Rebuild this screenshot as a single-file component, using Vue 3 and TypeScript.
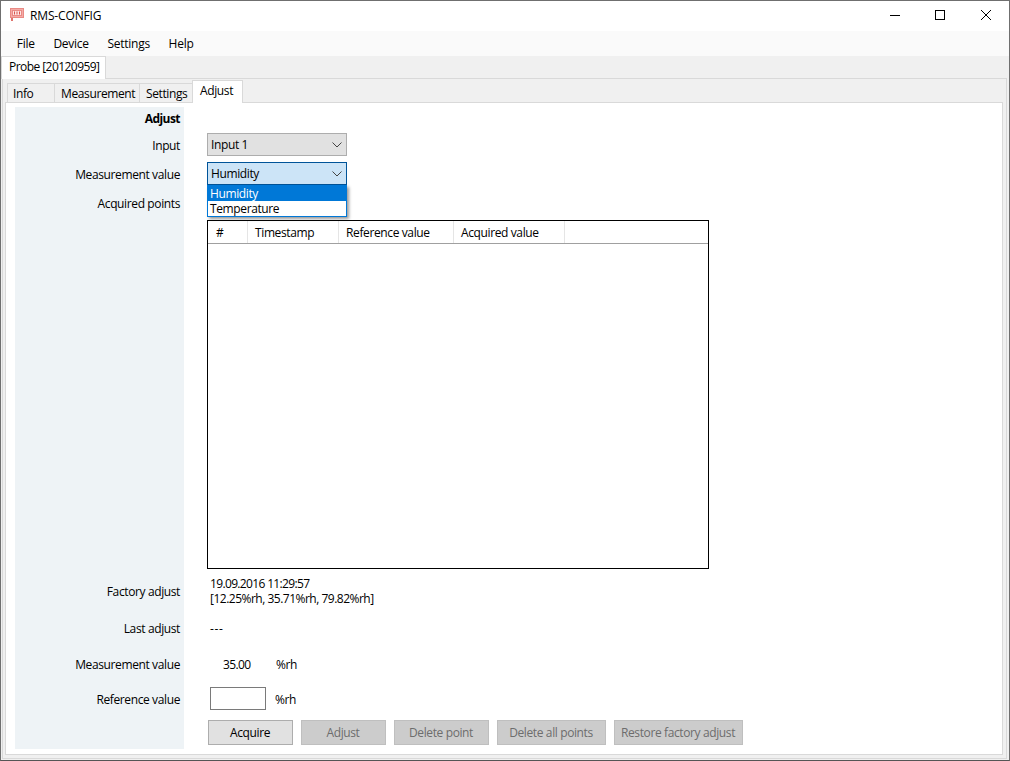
<template>
  <div class="window">
    <div class="titlebar">
      <svg class="app-icon" width="16" height="16" viewBox="0 0 16 16">
        <rect x="1.5" y="1.5" width="13" height="9" fill="#f4aaa6" stroke="#e98a84" />
        <rect x="3.5" y="3.5" width="9" height="5" fill="#fde6e4" stroke="#e98a84" />
        <path d="M5.5 4.5v3M8 4.5v3M10.5 4.5v3" stroke="#d9534c" />
        <rect x="2" y="11" width="2" height="3" fill="#e0736c" />
      </svg>
      <span class="title">RMS-CONFIG</span>
      <div class="win-btns">
        <svg width="46" height="30" viewBox="0 0 46 30"><path d="M19 15.5h10" stroke="#000" fill="none" /></svg>
        <svg width="46" height="30" viewBox="0 0 46 30"><rect x="18.5" y="10.5" width="9" height="9" stroke="#000" fill="none" /></svg>
        <svg width="46" height="30" viewBox="0 0 46 30"><path d="M18 10l10 10M28 10l-10 10" stroke="#000" fill="none" /></svg>
      </div>
    </div>
    <div class="menubar">
      <span v-for="m in menus" :key="m" class="menu-item">{{ m }}</span>
    </div>
    <div class="device-tabs">
      <div class="device-tab">Probe [20120959]</div>
    </div>
    <div class="device-pane">
      <div class="tabs">
        <div v-for="t in tabs" :key="t.name" class="tab" :class="{ active: t.name === 'Adjust' }" :style="{ width: t.width + 'px' }">{{ t.name }}</div>
      </div>
      <div class="tab-pane">
        <div class="form">
          <div class="row row-title">
            <div class="label"><b>Adjust</b></div>
            <div class="value"></div>
          </div>
          <div class="row row-input">
            <div class="label">Input</div>
            <div class="value">
              <div class="combo">
                <span>Input 1</span>
                <svg width="10" height="6" viewBox="0 0 10 6"><path d="M0.5 0.5L5 5L9.5 0.5" stroke="#444" fill="none" /></svg>
              </div>
            </div>
          </div>
          <div class="row row-meas">
            <div class="label">Measurement value</div>
            <div class="value">
              <div class="combo focused">
                <span>Humidity</span>
                <svg width="10" height="6" viewBox="0 0 10 6"><path d="M0.5 0.5L5 5L9.5 0.5" stroke="#444" fill="none" /></svg>
                <div class="popup">
                  <div class="option selected">Humidity</div>
                  <div class="option">Temperature</div>
                </div>
              </div>
            </div>
          </div>
          <div class="row row-acquired">
            <div class="label">Acquired points</div>
            <div class="value"></div>
          </div>
          <div class="row row-table">
            <div class="label"></div>
            <div class="value">
              <div class="table">
                <div class="thead">
                  <div v-for="c in columns" :key="c.name" class="th" :style="{ width: c.width + 'px' }">{{ c.name }}</div>
                </div>
              </div>
            </div>
          </div>
          <div class="row row-factory">
            <div class="label">Factory adjust</div>
            <div class="value text-value">
              <div class="date">19.09.2016 11:29:57</div>
              <div class="points">[12.25%rh, 35.71%rh, 79.82%rh]</div>
            </div>
          </div>
          <div class="row row-last">
            <div class="label">Last adjust</div>
            <div class="value text-value dashes">---</div>
          </div>
          <div class="row row-current">
            <div class="label">Measurement value</div>
            <div class="value text-value">
              <span class="num">35.00</span><span>%rh</span>
            </div>
          </div>
          <div class="row row-ref">
            <div class="label">Reference value</div>
            <div class="value text-value">
              <div class="edit"></div><span>%rh</span>
            </div>
          </div>
          <div class="row row-buttons">
            <div class="label"></div>
            <div class="value buttons">
              <div v-for="b in buttons" :key="b.name" class="btn" :class="{ disabled: b.disabled }" :style="{ width: b.width + 'px' }">{{ b.name }}</div>
            </div>
          </div>
        </div>
      </div>
    </div>
  </div>
</template>

<script setup lang="ts">
const menus = ['File', 'Device', 'Settings', 'Help'];
const tabs = [
  { name: 'Info', width: 48 },
  { name: 'Measurement', width: 85 },
  { name: 'Settings', width: 53 },
  { name: 'Adjust', width: 51 },
];
const columns = [
  { name: '#', width: 40 },
  { name: 'Timestamp', width: 91 },
  { name: 'Reference value', width: 115 },
  { name: 'Acquired value', width: 111 },
];
const buttons = [
  { name: 'Acquire', width: 85, disabled: false },
  { name: 'Adjust', width: 85, disabled: true },
  { name: 'Delete point', width: 95, disabled: true },
  { name: 'Delete all points', width: 109, disabled: true },
  { name: 'Restore factory adjust', width: 129, disabled: true },
];
</script>

<style>
body {
  margin: 0;
  background: #fff;
}
</style>

<style scoped>
.window {
  width: 1010px;
  height: 761px;
  box-sizing: border-box;
  border: 1px solid #6f6f6f;
  border-bottom-color: #555;
  background: #f0f0f0;
  font-family: "Open Sans", "Liberation Sans", sans-serif;
  font-size: 12px;
  letter-spacing: -0.38px;
  color: #000;
  overflow: hidden;
  display: flex;
  flex-direction: column;
}

.titlebar {
  height: 30px;
  box-sizing: border-box;
  padding: 0 0 2px 8px;
  background: #fff;
  display: flex;
  align-items: center;
  flex: none;
}

.app-icon {
  margin-right: 5px;
}

.title {
  flex: 1;
  letter-spacing: -0.15px;
}

.win-btns {
  display: flex;
  height: 30px;
}

.menubar {
  height: 25px;
  background: #fafafa;
  display: flex;
  align-items: center;
  padding-left: 6.5px;
  flex: none;
  letter-spacing: -0.25px;
}

.menu-item {
  padding: 0 9.3px;
}

.device-tabs {
  height: 22px;
  flex: none;
  display: flex;
}

.device-tab {
  width: 105px;
  height: 23px;
  box-sizing: border-box;
  background: #fff;
  border: 1px solid #d9d9d9;
  border-bottom: none;
  padding: 1px 0 0 7px;
  letter-spacing: -0.55px;
  position: relative;
  z-index: 1;
}

.device-pane {
  flex: 1;
  margin: 0 2px 1px 1px;
  border: 1px solid #d9d9d9;
  padding: 1px 3px 3px 2px;
  display: flex;
  flex-direction: column;
  min-height: 0;
}

.tabs {
  display: flex;
  height: 22px;
  flex: none;
  padding-left: 2px;
}

.tab {
  height: 20px;
  margin-top: 3px;
  box-sizing: border-box;
  background: #f0f0f0;
  border: 1px solid #d9d9d9;
  border-left: none;
  padding: 1px 0 0 6px;
  white-space: nowrap;
}

.tab:first-child {
  border-left: 1px solid #d9d9d9;
  padding-left: 5px;
}

.tab.active {
  height: 23px;
  margin-top: 0;
  background: #fff;
  border-bottom: none;
  margin-left: -1px;
  border-left: 1px solid #d9d9d9;
  padding: 1px 0 0 7px;
  position: relative;
  z-index: 1;
}

.tab-pane {
  flex: 1;
  background: #fff;
  border: 1px solid #d9d9d9;
  padding: 4px 0 0 9px;
  min-height: 0;
}

.form {
  display: flex;
  flex-direction: column;
}

.row {
  display: flex;
}

.label {
  width: 169px;
  flex: none;
  box-sizing: border-box;
  background: #eef3f6;
  padding-right: 4px;
  text-align: right;
  display: flex;
  align-items: center;
  justify-content: flex-end;
  white-space: nowrap;
}

.label b {
  letter-spacing: -0.55px;
}

.value {
  flex: 1;
  padding-left: 23px;
  display: flex;
  align-items: center;
}

.row-title { height: 23px; }
.row-input { height: 30px; }
.row-meas { height: 29px; }
.row-acquired { height: 28px; }
.row-table { height: 355px; }
.row-factory { height: 38px; }
.row-last { height: 36px; }
.row-current { height: 36px; }
.row-ref { height: 34px; }
.row-buttons { height: 33px; }

.combo {
  width: 140px;
  height: 23px;
  margin-bottom: 1px;
  box-sizing: border-box;
  background: #e1e1e1;
  border: 1px solid #adadad;
  padding: 0 4px 0 3px;
  display: flex;
  align-items: center;
  justify-content: space-between;
  position: relative;
}

.combo.focused {
  margin-bottom: 2px;
  background: #cce4f7;
  border-color: #005499;
}

.popup {
  position: absolute;
  left: -1px;
  top: 22px;
  width: 140px;
  box-sizing: border-box;
  background: #fff;
  border: 1px solid #0078d7;
  border-top: none;
  box-shadow: 2px 2px 3px rgba(0, 0, 0, 0.4);
  z-index: 2;
}

.option {
  height: 15px;
  line-height: 15px;
  padding-left: 2px;
}

.option.selected {
  height: 16px;
  line-height: 17px;
  background: #0078d7;
  color: #fff;
}

.table {
  width: 502px;
  height: 349px;
  box-sizing: border-box;
  border: 1px solid #000;
  background: #fff;
}

.thead {
  height: 23px;
  box-sizing: border-box;
  display: flex;
  border-bottom: 1px solid #a0a0a0;
}

.th {
  box-sizing: border-box;
  border-right: 1px solid #e5e5e5;
  padding: 3px 0 0 7px;
  white-space: nowrap;
}

.th:first-child {
  padding-left: 8px;
}

.text-value {
  padding-left: 26px;
  line-height: 15px;
  display: block;
  align-self: center;
}

.date {
  letter-spacing: -0.65px;
}

.points {
  letter-spacing: -0.5px;
}

.dashes {
  letter-spacing: 0.6px;
}

.row-current .text-value,
.row-ref .text-value {
  display: flex;
  align-items: center;
}

.num {
  margin-left: 13px;
  width: 53px;
  letter-spacing: -0.6px;
}

.edit {
  width: 56px;
  height: 23px;
  margin-bottom: 1px;
  margin-right: 9px;
  box-sizing: border-box;
  border: 1px solid #7a7a7a;
  background: #fff;
}

.buttons {
  padding-left: 24px;
  gap: 8px;
}

.btn {
  height: 25px;
  box-sizing: border-box;
  padding-right: 1px;
  background: #e1e1e1;
  border: 1px solid #adadad;
  display: flex;
  align-items: center;
  justify-content: center;
  white-space: nowrap;
}

.btn.disabled {
  background: #cccccc;
  border-color: #bfbfbf;
  color: #6d6d6d;
}
</style>
